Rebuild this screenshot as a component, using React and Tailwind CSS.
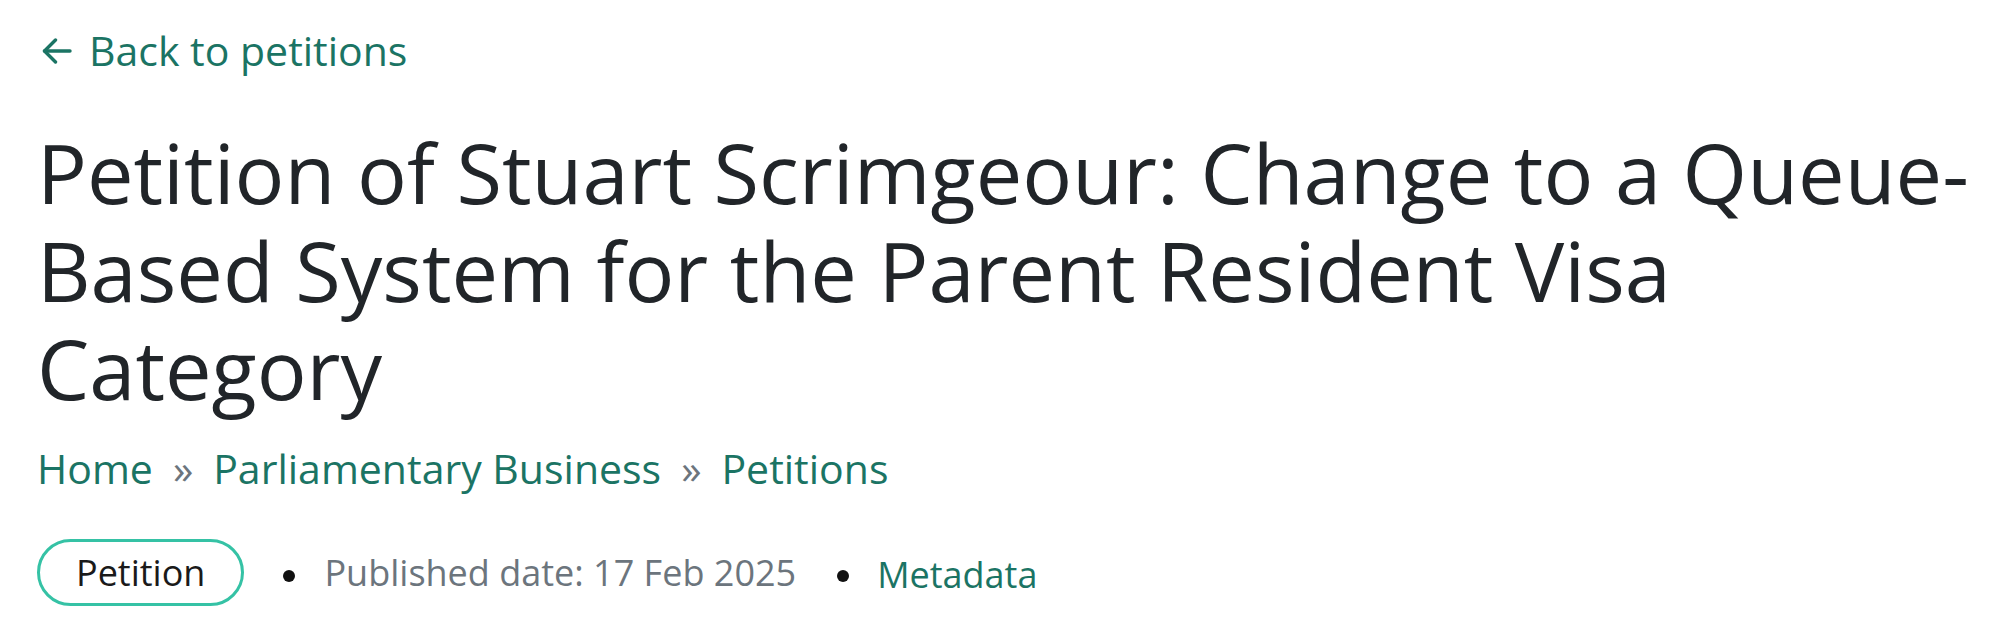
import React from 'react'

function BackArrow() {
  return (
    <svg width="30" height="26" viewBox="0 0 30 26" fill="none" stroke="currentColor" strokeWidth="3.4" strokeLinecap="round" strokeLinejoin="round">
      <path d="M28 13H2.5" />
      <path d="M13.5 2L2.5 13l11 11" />
    </svg>
  )
}

function Dot({ className }) {
  return <span className={`inline-block w-[12px] h-[12px] rounded-full bg-[#111] mt-[6px] ${className}`} />
}

export default function App() {
  return (
    <div className="min-h-screen bg-white pl-[37px] pr-[20px] font-['Open_Sans',sans-serif]">
      <a href="#" className="flex items-center gap-[17px] pt-[22px] pl-[5px] text-[41px] leading-[57px] text-[#1b7464]">
        <BackArrow />
        <span>Back to petitions</span>
      </a>

      <h1 className="mt-[44px] text-[83px] leading-[98px] font-normal text-[#212529]">
        Petition of Stuart Scrimgeour: Change to a Queue-Based System for the Parent Resident Visa Category
      </h1>

      {/* Breadcrumb */}
      <nav className="mt-[21px] flex items-center gap-[20px] text-[41px] leading-[60px]">
        <a href="#" className="text-[#1b7464]">Home</a>
        <span className="text-[#6c757d]">»</span>
        <a href="#" className="text-[#1b7464]">Parliamentary Business</a>
        <span className="text-[#6c757d]">»</span>
        <a href="#" className="text-[#1b7464]">Petitions</a>
      </nav>

      <div className="mt-[41px] flex items-center">
        <span className="flex items-center h-[67px] px-[36px] rounded-full border-[3px] border-[#35c2a5] text-[36px] leading-none text-[#1a1a1a]">
          Petition
        </span>
        <Dot className="ml-[39px] mr-[29px]" />
        <span className="text-[36px] leading-[54px] text-[#6c757d]">Published date: 17 Feb 2025</span>
        <Dot className="ml-[41px] mr-[28px]" />
        <a href="#" className="mt-[4px] text-[36px] leading-[54px] text-[#1b7464]">Metadata</a>
      </div>
    </div>
  )
}
